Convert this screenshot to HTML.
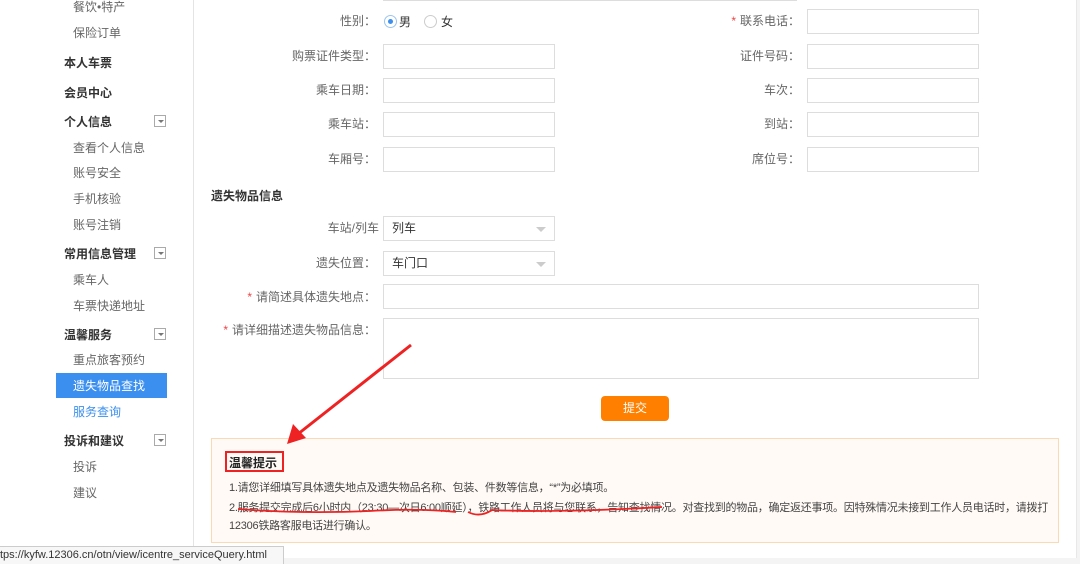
<!DOCTYPE html>
<html><head><meta charset="utf-8"><style>
*{margin:0;padding:0;box-sizing:border-box}
body{width:1080px;height:564px;overflow:hidden;background:#fff;font-family:"Liberation Sans","Noto Sans CJK SC",sans-serif;font-size:12px;color:#333;position:relative}
.a{position:absolute;white-space:nowrap}
.s{left:73px;color:#666}
.b{left:64px;font-weight:bold;color:#333}
.tg{position:absolute;left:154px;width:12px;height:12px;border:1px solid #aaa;background:#fff}
.tg:after{content:"";position:absolute;left:3px;top:4px;border:3px solid transparent;border-top:3px solid #777}
.lb{position:absolute;text-align:right;color:#666;line-height:25px;height:25px}
.in{position:absolute;border:1px solid #ddd;background:#fff;height:25px}
.st{color:#e44;margin-right:4px}
.dd{position:absolute;right:8px;top:10px;border:5px solid transparent;border-top:5px solid #ccc}
</style></head><body>
<div class="a" style="left:193px;top:0;width:1px;height:564px;background:#e4e4e4"></div>
<div class="a" style="left:1076px;top:0;width:1px;height:558px;background:#e8e8e8"></div>
<div class="a" style="left:1077px;top:0;width:3px;height:564px;background:#f4f4f4"></div>
<div class="a" style="left:194px;top:558px;width:886px;height:6px;background:#f4f4f4"></div>

<div class="a s" style="top:-2px">餐饮•特产</div>
<div class="a s" style="top:24px">保险订单</div>
<div class="a b" style="top:54px">本人车票</div>
<div class="a b" style="top:84px">会员中心</div>
<div class="a b" style="top:113px">个人信息</div><div class="tg" style="top:115px"></div>
<div class="a s" style="top:139px">查看个人信息</div>
<div class="a s" style="top:164px">账号安全</div>
<div class="a s" style="top:190px">手机核验</div>
<div class="a s" style="top:216px">账号注销</div>
<div class="a b" style="top:245px">常用信息管理</div><div class="tg" style="top:247px"></div>
<div class="a s" style="top:271px">乘车人</div>
<div class="a s" style="top:297px">车票快递地址</div>
<div class="a b" style="top:326px">温馨服务</div><div class="tg" style="top:328px"></div>
<div class="a s" style="top:351px">重点旅客预约</div>
<div class="a" style="left:56px;top:373px;width:111px;height:25px;background:#3b8fee"></div>
<div class="a" style="left:73px;top:377px;color:#fff">遗失物品查找</div>
<div class="a" style="left:73px;top:403px;color:#3b8fee">服务查询</div>
<div class="a b" style="top:432px">投诉和建议</div><div class="tg" style="top:434px"></div>
<div class="a s" style="top:458px">投诉</div>
<div class="a s" style="top:484px">建议</div>

<div class="a" style="left:383px;top:0;width:414px;height:1px;background:#ddd"></div>

<div class="lb" style="left:200px;width:176px;top:9px">性别：</div>
<div class="a" style="left:384px;top:15px;width:13px;height:13px;border:1px solid #9cc4ef;border-radius:50%"><div style="margin:3px;width:5px;height:5px;border-radius:50%;background:#3b8fee"></div></div>
<div class="a" style="left:399px;top:13px;color:#333">男</div>
<div class="a" style="left:424px;top:15px;width:13px;height:13px;border:1px solid #ccc;border-radius:50%"></div>
<div class="a" style="left:441px;top:13px;color:#333">女</div>

<div class="lb" style="left:200px;width:176px;top:44px">购票证件类型：</div><div class="in" style="left:383px;top:44px;width:172px"></div>
<div class="lb" style="left:200px;width:176px;top:78px">乘车日期：</div><div class="in" style="left:383px;top:78px;width:172px"></div>
<div class="lb" style="left:200px;width:176px;top:112px">乘车站：</div><div class="in" style="left:383px;top:112px;width:172px"></div>
<div class="lb" style="left:200px;width:176px;top:147px">车厢号：</div><div class="in" style="left:383px;top:147px;width:172px"></div>

<div class="lb" style="left:620px;width:180px;top:9px"><span class="st">*</span>联系电话：</div><div class="in" style="left:807px;top:9px;width:172px"></div>
<div class="lb" style="left:620px;width:180px;top:44px">证件号码：</div><div class="in" style="left:807px;top:44px;width:172px"></div>
<div class="lb" style="left:620px;width:180px;top:78px">车次：</div><div class="in" style="left:807px;top:78px;width:172px"></div>
<div class="lb" style="left:620px;width:180px;top:112px">到站：</div><div class="in" style="left:807px;top:112px;width:172px"></div>
<div class="lb" style="left:620px;width:180px;top:147px">席位号：</div><div class="in" style="left:807px;top:147px;width:172px"></div>

<div class="a" style="left:211px;top:187px;font-weight:bold;color:#333">遗失物品信息</div>

<div class="lb" style="left:200px;width:179px;top:216px">车站/列车</div><div class="in" style="left:383px;top:216px;width:172px;padding-left:8px;line-height:23px;color:#333">列车<div class="dd"></div></div>
<div class="lb" style="left:200px;width:176px;top:251px">遗失位置：</div><div class="in" style="left:383px;top:251px;width:172px;padding-left:8px;line-height:23px;color:#333">车门口<div class="dd"></div></div>
<div class="lb" style="left:200px;width:176px;top:285px"><span class="st">*</span>请简述具体遗失地点：</div><div class="in" style="left:383px;top:284px;width:596px"></div>
<div class="lb" style="left:200px;width:176px;top:318px"><span class="st">*</span>请详细描述遗失物品信息：</div><div class="in" style="left:383px;top:318px;width:596px;height:61px"></div>

<div class="a" style="left:601px;top:396px;width:68px;height:25px;background:#ff8000;border-radius:4px;color:#fff;text-align:center;line-height:25px">提交</div>

<div class="a" style="left:211px;top:438px;width:848px;height:105px;background:#fffaf6;border:1px solid #fbd9b4"></div>
<div class="a" style="left:225px;top:451px;width:59px;height:21px;border:2px solid #e22"></div>
<div class="a" style="left:229px;top:454px;font-weight:bold;color:#222;font-size:12px">温馨提示</div>
<div class="a" style="left:229px;top:479px;font-size:11px;color:#444;letter-spacing:-0.25px">1.请您详细填写具体遗失地点及遗失物品名称、包装、件数等信息，“*”为必填项。</div>
<div class="a" style="left:229px;top:499px;font-size:11px;color:#444;letter-spacing:-0.25px">2.服务提交完成后6小时内（23:30—次日6:00顺延），铁路工作人员将与您联系，告知查找情况。对查找到的物品，确定返还事项。因特殊情况未接到工作人员电话时，请拨打</div>
<div class="a" style="left:229px;top:517px;font-size:11px;color:#444;letter-spacing:-0.25px">12306铁路客服电话进行确认。</div>
<svg class="a" style="left:0;top:0" width="1080" height="564">
<path d="M238 509 Q300 514 370 511 Q420 508 456 512 M468 512 Q480 518 492 510 Q560 513 662 507" stroke="#e22" stroke-width="1.8" fill="none"/>
<line x1="411" y1="345" x2="298" y2="434" stroke="#e22" stroke-width="3"/>
<polygon points="287,444 293,424 306,438" fill="#e22"/>
</svg>

<div class="a" style="left:0;top:546px;width:284px;height:18px;background:#f7f7f7;border:1px solid #ccc;border-left:none;border-bottom:none;font-size:11px;color:#333;line-height:16px">tps://kyfw.12306.cn/otn/view/icentre_serviceQuery.html</div>
</body></html>
